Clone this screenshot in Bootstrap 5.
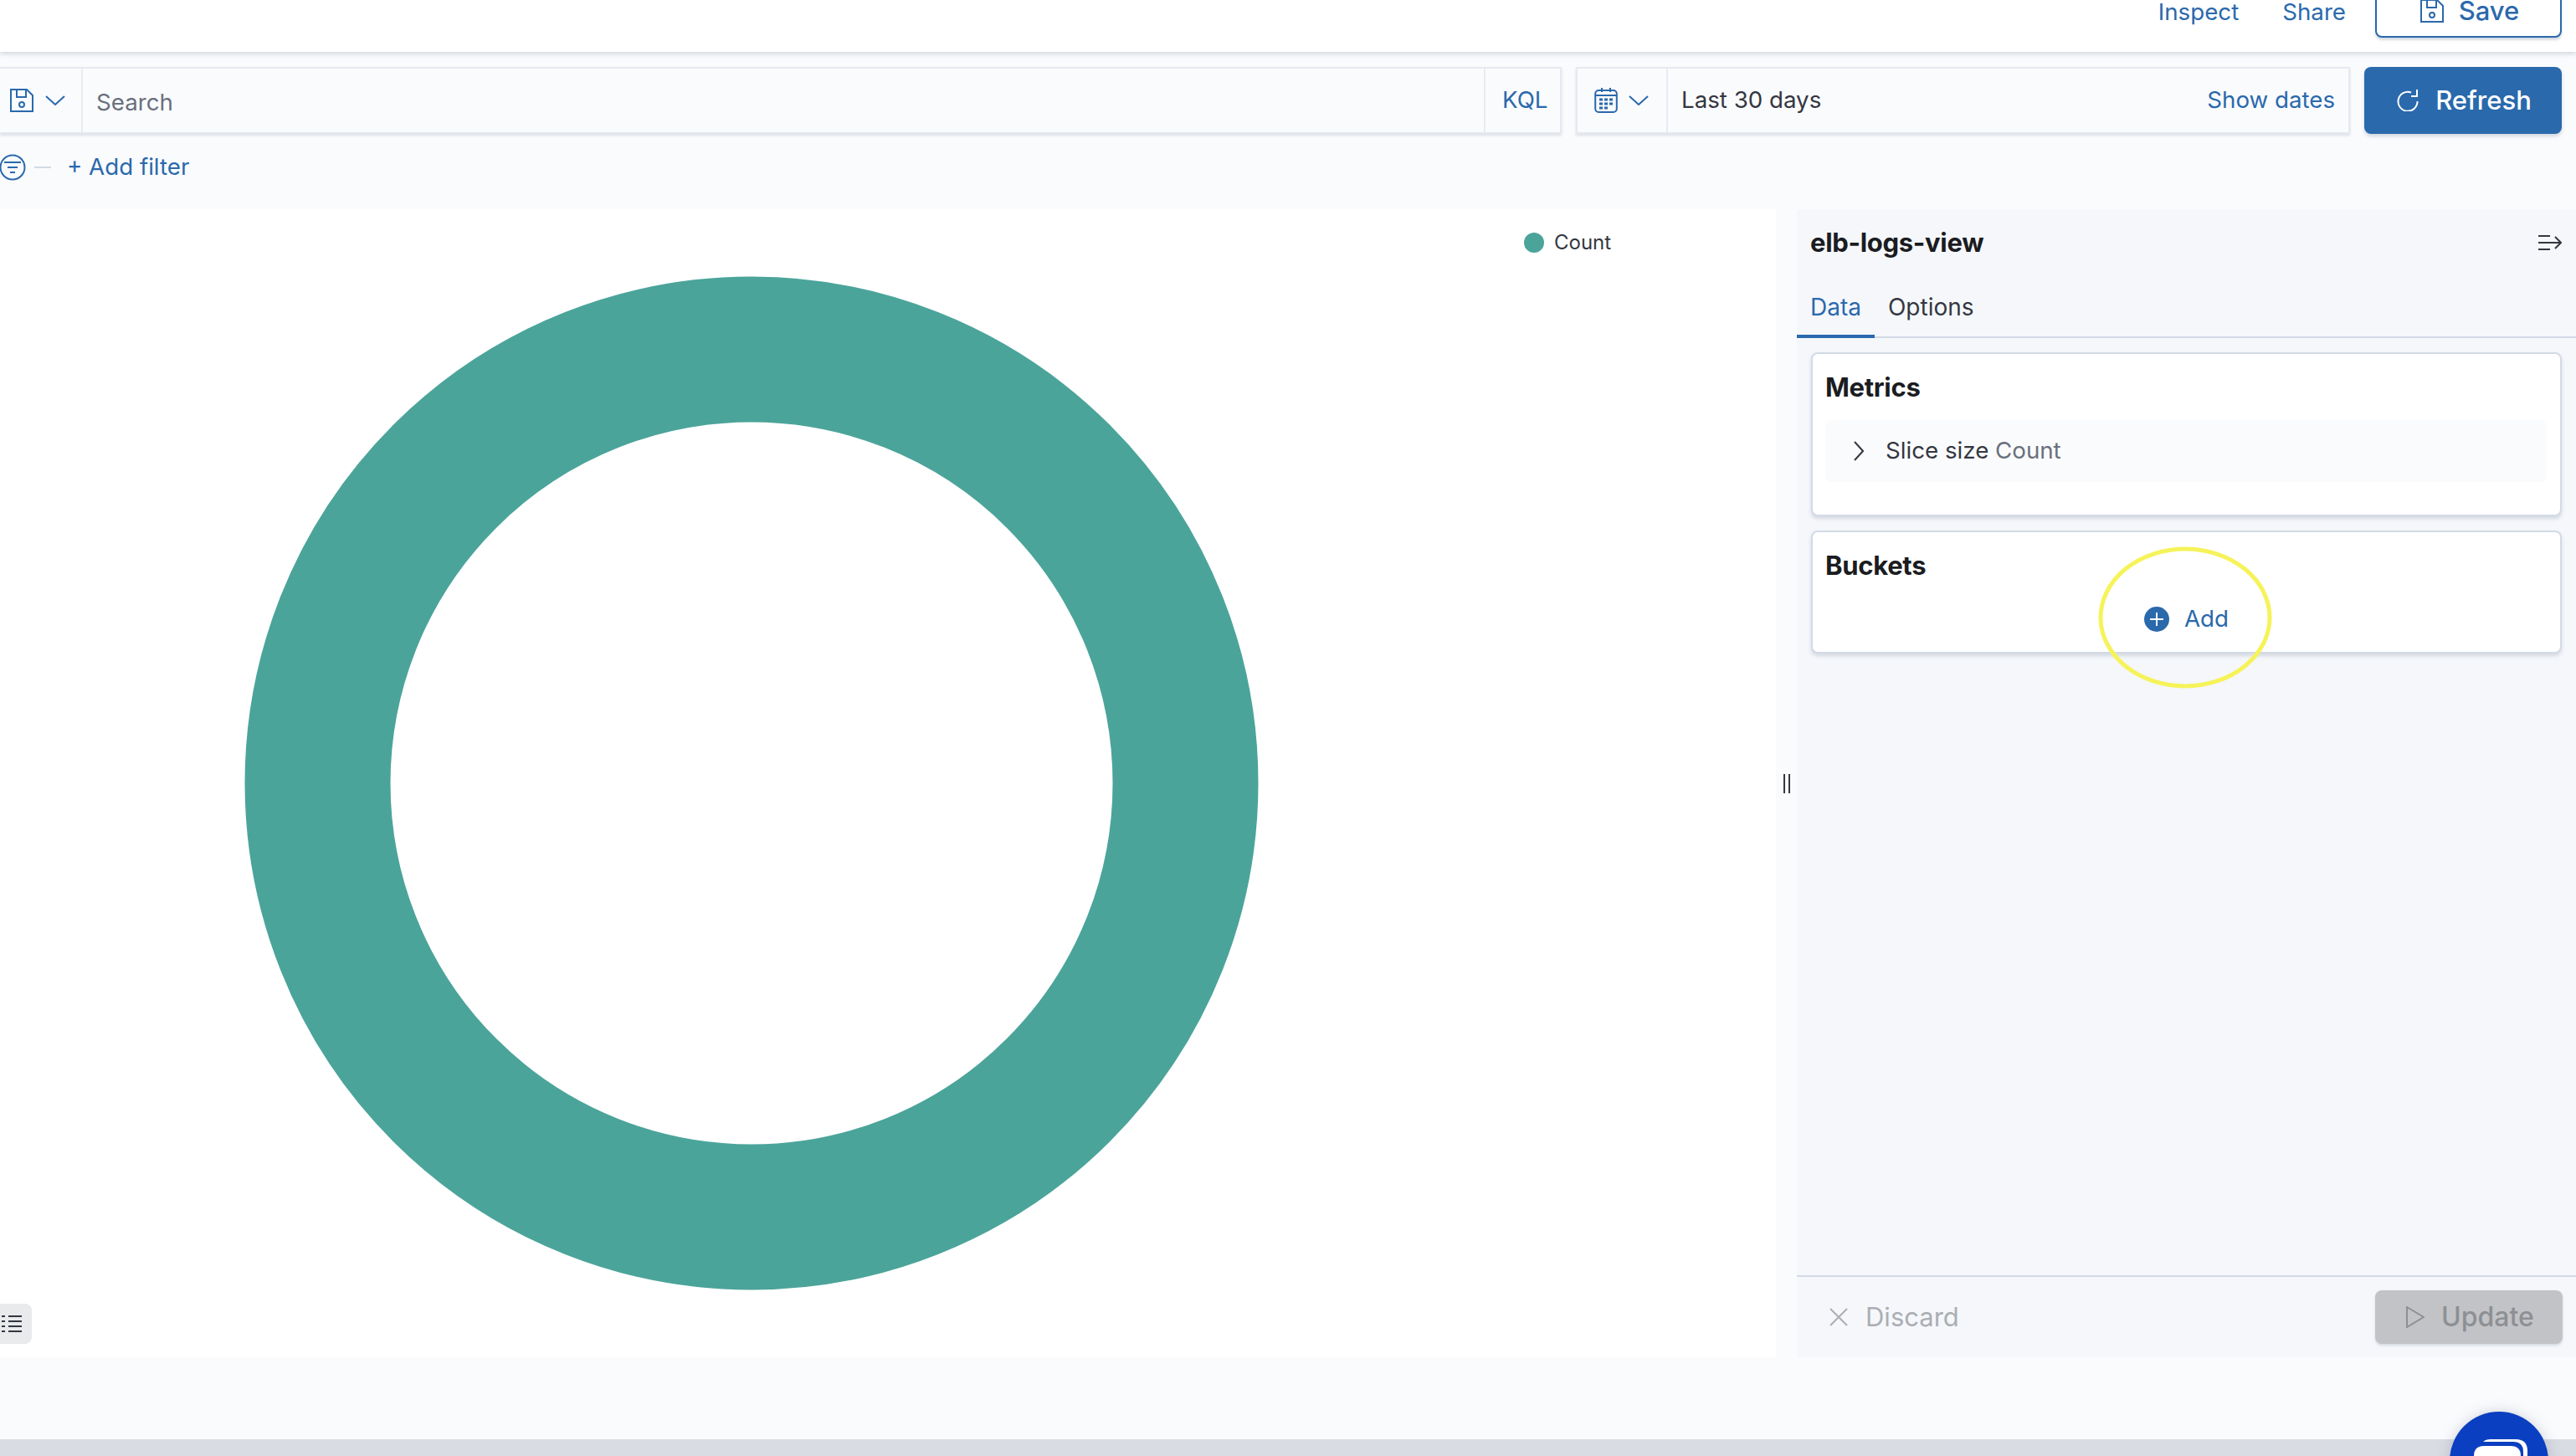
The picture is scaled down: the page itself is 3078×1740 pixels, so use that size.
<!DOCTYPE html>
<html lang="en">
<head>
<meta charset="UTF-8">
<title>elb-logs-view</title>
<link href="https://cdn.jsdelivr.net/npm/bootstrap@5.3.3/dist/css/bootstrap.min.css" rel="stylesheet">
<style>
    html, body { height: 1740px; overflow: hidden; }
    body { position: relative; font-family: Inter, "Liberation Sans", sans-serif; font-size: 27.7px; color: #343741; background: #fafbfd; }
    svg { display: block; flex: none; }
    .ico { fill: none; stroke: #2a69ac; stroke-width: 2; }
    .txt-link { color: #2a69ac; text-decoration: none; }

    .top-strip { height: 62px; background: #fff; padding: 0 17px 17px 0; overflow: hidden; box-shadow: 0 2px 6px rgba(152,162,179,.45); position: relative; gap: 52px; }
    .top-strip .txt-link { margin-bottom: 17px; line-height: 28px; }
    .save-btn { width: 223px; height: 64px; margin-left: -17px; flex: none; padding-left: 3px !important; font-size: 31px; line-height: 26px; font-weight: 500; color: #2a69ac; background: #fff; border: 2px solid #2a69ac; border-radius: 8px; box-shadow: 0 3px 3px rgba(152,162,179,.4); gap: 18px; }

    .query-row { padding: 18px 17px 0 0; gap: 17px; }
    .query-box { height: 80px; background: #fafbfd; border: 2px solid #e6e9f0; border-left: 0; box-shadow: 0 2px 3px rgba(152,162,179,.3); }
    .box-search { width: 1866px; }
    .box-date { width: 925px; border-left: 2px solid #e6e9f0; }
    .box-part { height: 100%; border-right: 2px solid #e8ebf1; }
    .part-save { width: 99px; padding-left: 12px; gap: 14px; }
    .part-cal { width: 108px; padding-left: 20px; gap: 13px; }
    .search-input { flex: 1; height: 100%; padding: 4px 0 0 16px; font-size: 27.7px; color: #69707d; background: transparent; border: 0; border-radius: 0; box-shadow: none; }
    .search-input::placeholder { color: #69707d; opacity: 1; }
    .part-kql { width: 91px; height: 100%; padding-left: 20px; border-left: 2px solid #e8ebf1; }
    .date-show { padding-right: 16px; margin-left: 2px; }
    .refresh-btn { width: 236px; height: 80px; flex: none; padding-left: 3px !important; font-size: 31px; font-weight: 500; color: #fff; background: #2a69ac; border: 0; border-radius: 8px; box-shadow: 0 3px 4px rgba(152,162,179,.4); gap: 20px; }

    .filter-row { height: 90px; padding-top: 1px; padding-bottom: 11px; }
    .filter-dash { width: 20px; height: 2px; margin: 0 19px 0 10px; background: #d3dae6; }

    .main-row { height: 1372px; }
    .chart-pane { position: relative; width: 2122px; background: #fff; }
    .chart-area { width: 1796px; }
    .legend-item { padding: 26px 0 0 25px; font-size: 24px; line-height: 28px; gap: 12px; }
    .legend-dot { width: 24px; height: 24px; border-radius: 50%; background: #4ba49a; }
    .legend-btn { position: absolute; left: 0; top: 1308px; width: 38px; height: 48px; padding-left: 2px; background: #e9eaec; border-radius: 0 8px 8px 0; }
    .split-bar { width: 25px; }
    .split-grip { width: 8px; height: 23px; border-left: 2px solid #343741; border-right: 2px solid #343741; }

    .side-pane { flex: 1; background: #f5f7fb; }
    .side-head { height: 80px; padding: 0 17px 0 16px; }
    .side-title { font-size: 31px; font-weight: 700; color: #1a1c21; letter-spacing: -.3px; }
    .side-tabs { height: 74px; border-bottom: 2px solid #d3dae6; }
    .side-tabs .nav-link { height: 74px; padding: 0 16px; margin: 0; line-height: 74px; font-size: 28px; color: #343741; background: none; border: 0; border-radius: 0; }
    .side-tabs .nav-link.active { color: #2a69ac; background: none; border-bottom: 4px solid #2a69ac; }
    .side-body { padding: 17px 17px 0; gap: 17px; }
    .agg-card { position: relative; background: #fff; border: 2px solid #d3dae6; border-radius: 8px; box-shadow: 0 3px 4px rgba(152,162,179,.35); }
    .card-metrics { height: 196px; }
    .card-buckets { height: 147px; }
    .agg-title { padding: 22px 0 0 15px; font-size: 31px; font-weight: 700; line-height: 36px; color: #1a1c21; letter-spacing: -.3px; }
    .agg-row { height: 74px; margin: 21px 16px 0 15px; padding-left: 34px; background: #fafbfd; border-radius: 8px; gap: 26px; }
    .muted-txt { color: #69707d; }
    .add-link { margin-top: 28px; height: 36px; gap: 18px; }
    .note-ring { position: absolute; left: 341px; top: 17px; }
    .side-foot { height: 98px; padding: 0 16px 0 39px; border-top: 2px solid #d3dae6; }
    .discard-btn { color: #abaeb3; gap: 21px; font-size: 31px; }
    .update-btn, .update-btn:disabled { width: 224px; height: 64px; padding-left: 3px !important; opacity: 1; font-size: 32px; font-weight: 500; color: #8d8f94; background: #c2c3c6; border: 0; border-radius: 8px; box-shadow: 0 2px 3px rgba(152,162,179,.35); gap: 20px; }

    .bottom-band { position: absolute; left: 0; right: 0; top: 1720px; height: 20px; background: #d9dce3; }
    .help-bubble { position: absolute; left: 2927px; top: 1687px; width: 118px; height: 118px; border-radius: 50%; background: #0b3fc1; box-shadow: 0 0 16px rgba(80,90,120,.25); }
</style>
</head>
<body>
    <div class="top-strip d-flex justify-content-end align-items-end">
        <a class="txt-link" href="#">Inspect</a>
        <a class="txt-link" href="#">Share</a>
        <button class="save-btn btn d-flex align-items-center justify-content-center p-0" type="button">
            <svg class="ico" width="28" height="28" viewBox="0 0 28 28"><path d="M1 1h19l7 7v19H1z"/><path d="M8 1v9h11V1"/><circle cx="14" cy="19" r="3"/></svg>
            Save
        </button>
    </div>

    <div class="query-row d-flex">
        <div class="query-box box-search d-flex align-items-center">
            <div class="box-part part-save d-flex align-items-center">
                <svg class="ico" width="28" height="28" viewBox="0 0 28 28"><path d="M1 1h19l7 7v19H1z"/><path d="M8 1v9h11V1"/><circle cx="14" cy="19" r="3"/></svg>
                <svg class="ico" width="24" height="12" viewBox="0 0 24 12"><path d="M1 1l11 10L23 1"/></svg>
            </div>
            <input class="form-control search-input" type="text" placeholder="Search">
            <div class="part-kql d-flex align-items-center"><a class="txt-link" href="#">KQL</a></div>
        </div>
        <div class="query-box box-date d-flex align-items-center">
            <div class="box-part part-cal d-flex align-items-center">
                <svg class="ico" width="28" height="30" viewBox="0 0 28 30" stroke-width="2.5"><rect x="1.2" y="3" width="25.6" height="26" rx="4"/><path d="M1 9h26M9 0v5M19 0v5"/><path stroke-dasharray="4 2" stroke-width="3" d="M6 14h17M6 19h17M6 24h11"/></svg>
                <svg class="ico" width="24" height="12" viewBox="0 0 24 12"><path d="M1 1l11 10L23 1"/></svg>
            </div>
            <div class="flex-grow-1 ps-3">Last 30 days</div>
            <a class="txt-link date-show" href="#">Show dates</a>
        </div>
        <button class="refresh-btn btn d-flex align-items-center justify-content-center p-0" type="button">
            <svg width="26" height="26" viewBox="0 0 26 26" fill="none" stroke="#fff" stroke-width="2"><path d="M17 3.5A11.5 11.5 0 1 0 24.5 14"/><path d="M24 0v8h-7"/></svg>
            Refresh
        </button>
    </div>

    <div class="filter-row d-flex align-items-center">
        <svg class="ico" width="31" height="32" viewBox="0 0 31 32"><circle cx="15" cy="16" r="14.5"/><path d="M5 10h20M9 16h12M12 22h6"/></svg>
        <span class="filter-dash"></span>
        <a class="txt-link" href="#">+ Add filter</a>
    </div>

    <div class="main-row d-flex">
        <div class="chart-pane d-flex">
            <div class="chart-area d-flex align-items-center justify-content-center">
                <svg width="1212" height="1212" viewBox="0 0 1212 1212"><circle cx="606" cy="606" r="518.5" fill="none" stroke="#4ba49a" stroke-width="174"/></svg>
            </div>
            <div class="legend-item d-flex align-items-center align-self-start">
                <span class="legend-dot"></span>
                <span>Count</span>
            </div>
            <div class="legend-btn d-flex align-items-center">
                <svg width="26" height="20" viewBox="0 0 26 20" fill="#343741"><path d="M0 0h4v2H0zM8 0h16v2H8zM0 6h4v2H0zM8 6h16v2H8zM0 12h4v2H0zM8 12h16v2H8zM0 18h4v2H0zM8 18h16v2H8z"/></svg>
            </div>
        </div>
        <div class="split-bar d-flex align-items-center justify-content-center"><div class="split-grip"></div></div>
        <div class="side-pane d-flex flex-column">
            <div class="side-head d-flex align-items-center justify-content-between">
                <span class="side-title">elb-logs-view</span>
                <svg width="28" height="20" viewBox="0 0 28 20" fill="none" stroke="#343741" stroke-width="2"><path d="M0 2h14M0 10h26M0 18h14M20 3l7 7-7 7"/></svg>
            </div>
            <ul class="nav side-tabs">
                <li class="nav-item"><a class="nav-link active" href="#">Data</a></li>
                <li class="nav-item"><a class="nav-link" href="#">Options</a></li>
            </ul>
            <div class="side-body d-flex flex-column flex-grow-1">
                <div class="agg-card card-metrics">
                    <div class="agg-title">Metrics</div>
                    <div class="agg-row d-flex align-items-center">
                        <svg width="12" height="24" viewBox="0 0 12 24" fill="none" stroke="#343741" stroke-width="2"><path d="M1 1l10 11L1 23"/></svg>
                        <span>Slice size <span class="muted-txt">Count</span></span>
                    </div>
                </div>
                <div class="agg-card card-buckets">
                    <div class="agg-title">Buckets</div>
                    <a class="add-link txt-link d-flex align-items-center justify-content-center" href="#">
                        <svg width="30" height="30" viewBox="0 0 30 30"><circle cx="15" cy="15" r="15" fill="#2a69ac"/><path d="M15 7v16M7 15h16" stroke="#fff" stroke-width="2"/></svg>
                        Add
                    </a>
                    <svg class="note-ring" width="208" height="170" viewBox="0 0 208 170"><ellipse cx="104" cy="85" rx="101" ry="82" fill="none" stroke="#f6f35a" stroke-width="5"/></svg>
                </div>
            </div>
            <div class="side-foot d-flex align-items-center justify-content-between">
                <div class="discard-btn d-flex align-items-center">
                    <svg width="22" height="22" viewBox="0 0 22 22" stroke="#abaeb3" stroke-width="2"><path d="M1 1l20 20M21 1L1 21"/></svg>
                    Discard
                </div>
                <button class="update-btn btn d-flex align-items-center justify-content-center p-0" type="button" disabled>
                    <svg width="22" height="26" viewBox="0 0 22 26" fill="none" stroke="#8d8f94" stroke-width="2"><path d="M1 1l20 12L1 25z"/></svg>
                    Update
                </button>
            </div>
        </div>
    </div>

    <div class="bottom-band"></div>
    <div class="help-bubble">
        <svg width="118" height="60" viewBox="0 0 118 60" fill="#fff"><path d="M29 53q0-12 12-12h32q12 0 12 12v7H29z"/><path d="M40 36q3-3 9-3h30q14 0 14 14v13h-5V48q0-12-12-12z"/></svg>
    </div>
</body>
</html>
